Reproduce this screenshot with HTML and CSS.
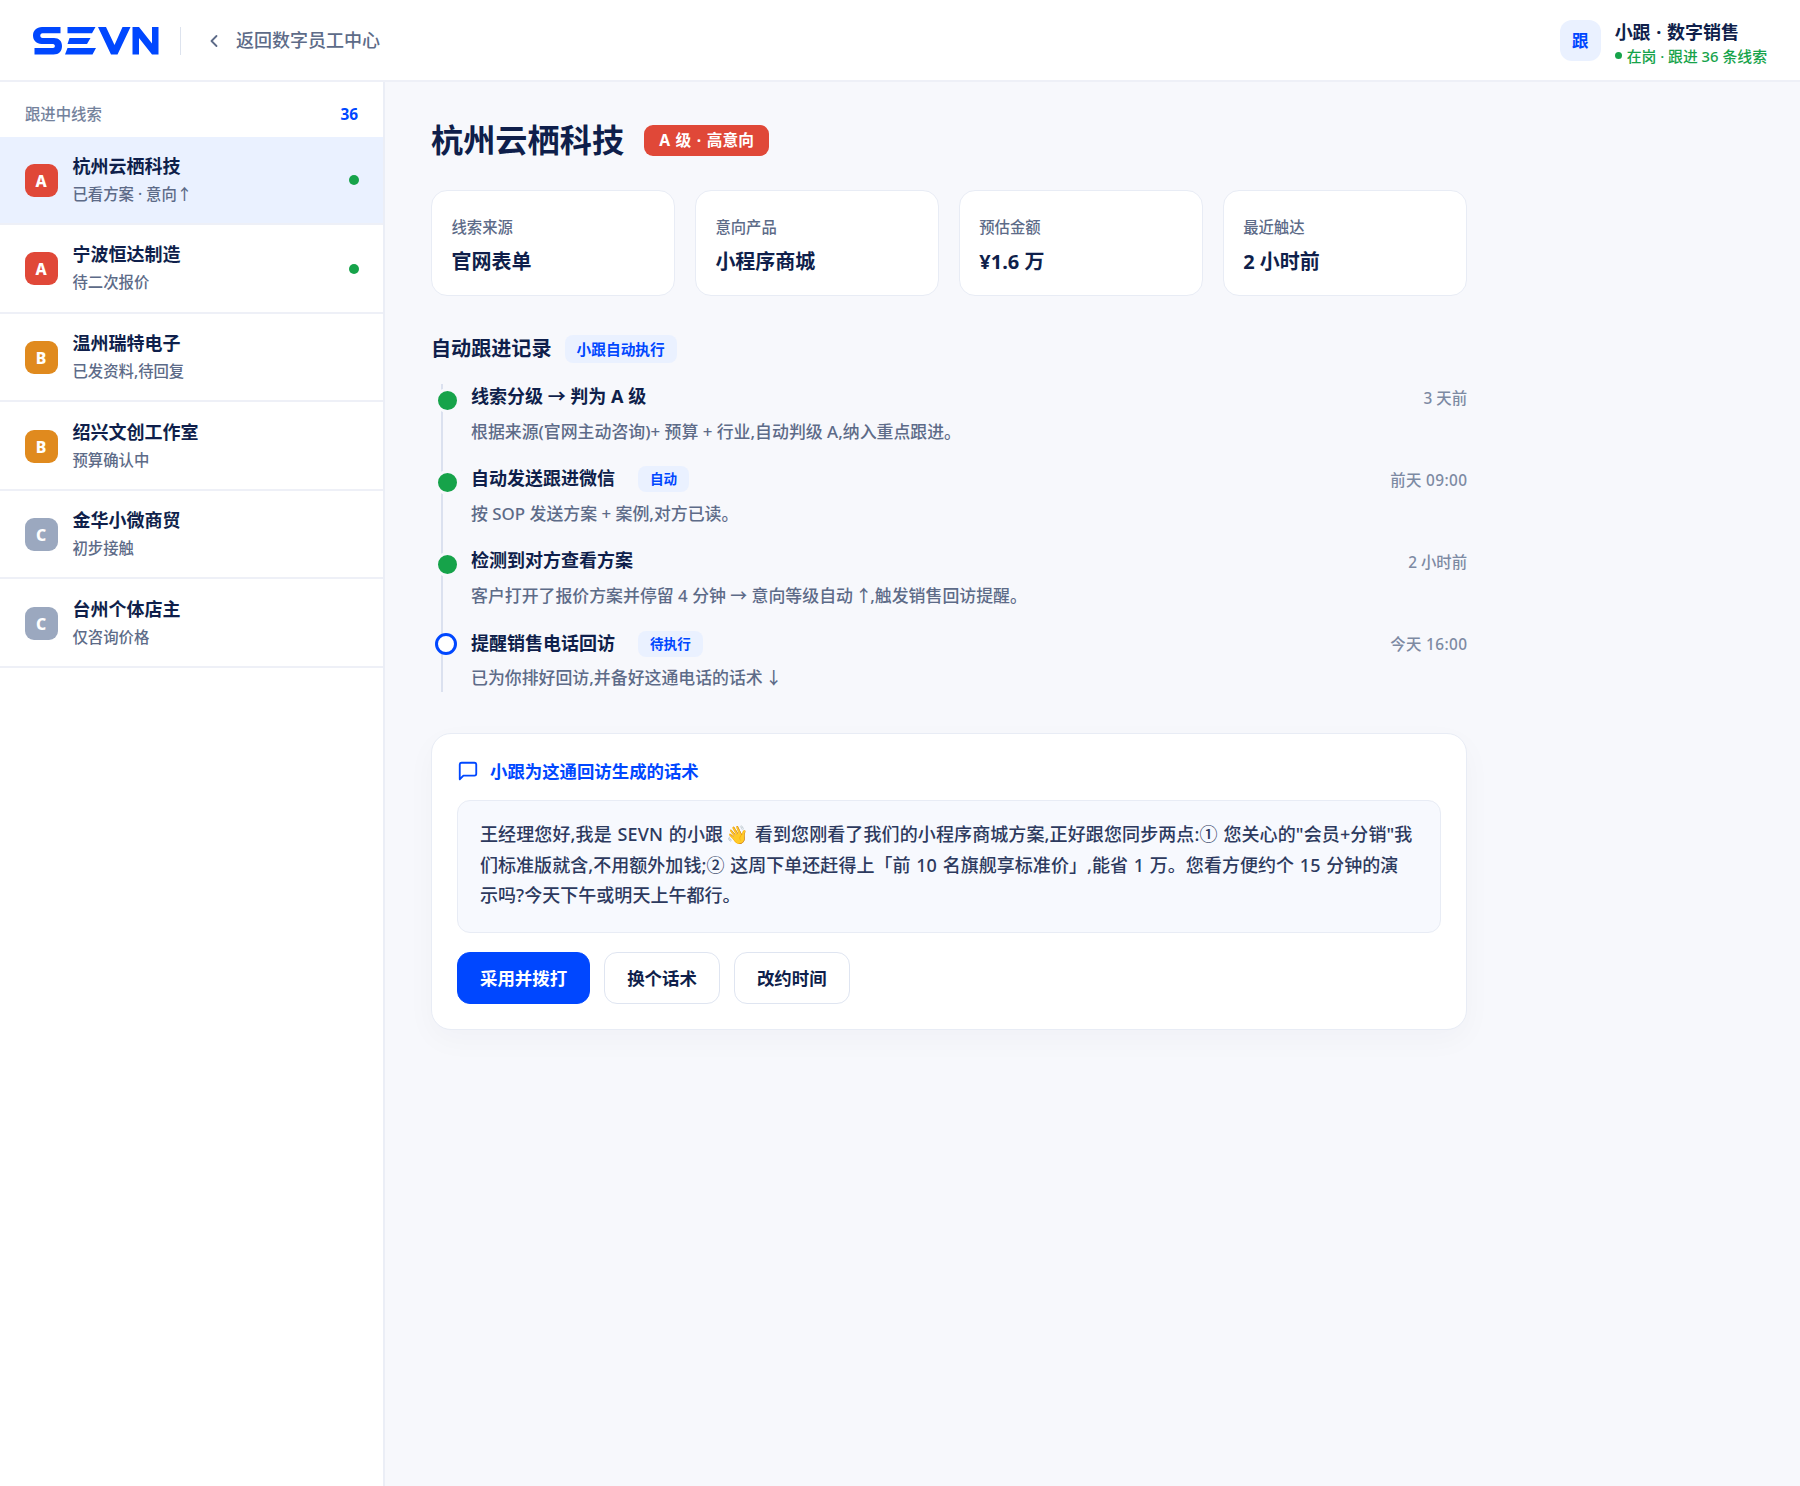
FILE: index.html
```html
<!DOCTYPE html>
<html lang="zh-CN">

<head>
    <meta charset="UTF-8">
    <title>小跟 · 数字销售</title>
    <meta name="viewport" content="width=device-width, initial-scale=1.0">
    <link rel="stylesheet" href="styles.css">
</head>

<body>
    <header class="topbar">
        <svg class="logo" viewBox="0 0 126 28" fill="#0047ff" role="img" aria-label="SEVN">
            <path d="M27.500 0H9C3.500 0 0 3.600 0 8.500S3.500 17 8.500 17H20C22.500 17 22.500 21 20 21H1.500V27.500H20.500C26 27.500 29 24 29 19S26 11 21 11H9.500C6.500 11 6.500 6.300 9.500 6.300H27.500Z"/>
            <path d="M34.500 0H62.500L59 6.300H34.500ZM36.500 11H57.500L54 17H34.500ZM34.500 21H63L59.500 27.500H32Z"/>
            <path d="M65 0H73L81.500 18L89.500 0H97.500L84.500 27.500H78Z"/>
            <path d="M99.500 0H106L119 16.500V0H125.500V27.500H119L106 11V27.500H99.500Z"/>
        </svg>
        <span class="divider"></span>
        <a class="back" href="#">
            <svg width="20" height="20" viewBox="0 0 24 24" fill="none" stroke="currentColor" stroke-width="2.2" stroke-linecap="round" stroke-linejoin="round"><path d="M15 18l-6-6 6-6"/></svg>
            <span>返回数字员工中心</span>
        </a>
        <div class="agent">
            <div class="avatar">跟</div>
            <div class="agent-info">
                <div class="agent-name">小跟 · 数字销售</div>
                <div class="agent-status"><i></i>在岗 · 跟进 36 条线索</div>
            </div>
        </div>
    </header>

    <div class="layout">
        <aside class="sidebar">
            <div class="side-head"><span>跟进中线索</span><b>36</b></div>
            <div class="lead active">
                <span class="grade a">A</span>
                <div class="lead-text"><b>杭州云栖科技</b><p>已看方案 · 意向↑</p></div>
                <i class="dot"></i>
            </div>
            <div class="lead">
                <span class="grade a">A</span>
                <div class="lead-text"><b>宁波恒达制造</b><p>待二次报价</p></div>
                <i class="dot"></i>
            </div>
            <div class="lead">
                <span class="grade b">B</span>
                <div class="lead-text"><b>温州瑞特电子</b><p>已发资料,待回复</p></div>
            </div>
            <div class="lead">
                <span class="grade b">B</span>
                <div class="lead-text"><b>绍兴文创工作室</b><p>预算确认中</p></div>
            </div>
            <div class="lead">
                <span class="grade c">C</span>
                <div class="lead-text"><b>金华小微商贸</b><p>初步接触</p></div>
            </div>
            <div class="lead">
                <span class="grade c">C</span>
                <div class="lead-text"><b>台州个体店主</b><p>仅咨询价格</p></div>
            </div>
        </aside>

        <main class="main">
            <div class="title-row">
                <h1>杭州云栖科技</h1>
                <span class="intent">A 级 · 高意向</span>
            </div>

            <div class="stats">
                <div class="stat"><p>线索来源</p><b>官网表单</b></div>
                <div class="stat"><p>意向产品</p><b>小程序商城</b></div>
                <div class="stat"><p>预估金额</p><b>¥1.6 万</b></div>
                <div class="stat"><p>最近触达</p><b>2 小时前</b></div>
            </div>

            <div class="section-head">
                <h2>自动跟进记录</h2>
                <span class="tag tag-lg">小跟自动执行</span>
            </div>

            <div class="timeline">
                <div class="step">
                    <i class="node"></i>
                    <div class="step-head"><b>线索分级 → 判为 A 级</b><time>3 天前</time></div>
                    <p>根据来源(官网主动咨询)+ 预算 + 行业,自动判级 A,纳入重点跟进。</p>
                </div>
                <div class="step">
                    <i class="node"></i>
                    <div class="step-head"><b>自动发送跟进微信</b><span class="tag">自动</span><time class="clock">前天 09:00</time></div>
                    <p>按 SOP 发送方案 + 案例,对方已读。</p>
                </div>
                <div class="step">
                    <i class="node"></i>
                    <div class="step-head"><b>检测到对方查看方案</b><time>2 小时前</time></div>
                    <p>客户打开了报价方案并停留 4 分钟 → 意向等级自动 <span class="arrow">↑</span>,触发销售回访提醒。</p>
                </div>
                <div class="step">
                    <i class="node pending"></i>
                    <div class="step-head"><b>提醒销售电话回访</b><span class="tag">待执行</span><time class="clock">今天 16:00</time></div>
                    <p>已为你排好回访,并备好这通电话的话术 <span class="arrow">↓</span></p>
                </div>
            </div>

            <section class="script-card">
                <div class="script-title">
                    <svg width="22" height="22" viewBox="0 0 24 24" fill="none" stroke="currentColor" stroke-width="2" stroke-linecap="round" stroke-linejoin="round"><path d="M21 15a2 2 0 0 1-2 2H7l-4 4V5a2 2 0 0 1 2-2h14a2 2 0 0 1 2 2z"/></svg>
                    小跟为这通回访生成的话术
                </div>
                <div class="script-box">王经理您好,我是 SEVN 的小跟 <span class="wave">👋</span> 看到您刚看了我们的小程序商城方案,正好跟您同步两点:① 您关心的"会员+分销"我<br>们标准版就含,不用额外加钱;② 这周下单还赶得上「前 10 名旗舰享标准价」,能省 1 万。您看方便约个 15 分钟的演<br>示吗?今天下午或明天上午都行。</div>
                <div class="actions">
                    <button class="btn primary">采用并拨打</button>
                    <button class="btn">换个话术</button>
                    <button class="btn">改约时间</button>
                </div>
            </section>
        </main>
    </div>
</body>

</html>
```
FILE: styles.css
```css
* {
    box-sizing: border-box;
}

body {
    margin: 0;
    min-height: 100vh;
    display: flex;
    flex-direction: column;
    font-family: "Noto Sans", "Noto Sans CJK SC", sans-serif;
    font-weight: 500;
    background: #f7f8fc;
    color: #0f1f4b;
}

h1, h2, p {
    margin: 0;
}

b, h1, h2 {
    font-weight: 700;
}

i {
    display: block;
    flex: none;
}

svg {
    flex: none;
}

.topbar {
    height: 82px;
    display: flex;
    align-items: center;
    padding: 1px 33px 0;
    background: #fff;
    border-bottom: 2px solid #eef0f7;
}

.logo {
    width: 126px;
    height: 28px;
}

.divider {
    width: 1px;
    height: 28px;
    margin: 0 23px 0 21px;
    background: #dde3ee;
}

.back {
    display: flex;
    align-items: center;
    gap: 12px;
    color: #5d6b88;
    font-size: 18px;
    line-height: 26px;
    text-decoration: none;
}

.back span {
    padding-bottom: 2px;
}

.agent {
    margin-left: auto;
    display: flex;
    align-items: center;
    gap: 14px;
}

.avatar {
    width: 41px;
    height: 41px;
    border-radius: 12px;
    background: #eaf1ff;
    color: #0047ff;
    font-size: 16.500px;
    font-weight: 700;
    line-height: 42px;
    text-align: center;
}

.agent-info {
    padding-top: 6px;
}

.agent-name {
    font-size: 18px;
    font-weight: 700;
    line-height: 24px;
    word-spacing: 1px;
}

.agent-status {
    display: flex;
    align-items: center;
    gap: 5px;
    color: #16a34a;
    font-size: 14.850px;
    line-height: 24px;
}

.agent-status i {
    width: 7px;
    height: 7px;
    border-radius: 50%;
    background: #16a34a;
}

.layout {
    flex: 1;
    display: flex;
}

.sidebar {
    width: 385px;
    flex: none;
    background: #fff;
    border-right: 2px solid #ebeef6;
}

.side-head {
    height: 55px;
    display: flex;
    justify-content: space-between;
    padding: 21px 25px 0 25px;
    color: #74829c;
    font-size: 15.360px;
    line-height: 24px;
}

.side-head b {
    color: #0047ff;
}

.lead {
    height: 88.600px;
    display: flex;
    align-items: center;
    gap: 15px;
    padding: 1px 24px 0 24.500px;
    border-bottom: 2px solid #eef0f7;
}

.lead.active {
    margin-top: -0.500px;
    background: #eaf1ff;
}

.grade {
    width: 33px;
    height: 33px;
    border-radius: 9px;
    color: #fff;
    font-size: 15.800px;
    font-weight: 800;
    line-height: 34px;
    text-align: center;
}

.grade.a {
    background: #e04838;
}

.grade.b {
    background: #e08a1e;
}

.grade.c {
    background: #9ba8bf;
}

.lead-text {
    flex: 1;
}

.lead-text b {
    display: block;
    font-size: 18px;
    line-height: 28px;
}

.lead-text p {
    padding-top: 1px;
    color: #5d6b88;
    font-size: 15.360px;
    line-height: 28px;
}

.dot {
    width: 10px;
    height: 10px;
    border-radius: 50%;
    background: #16a34a;
}

.main {
    width: 1082px;
    padding: 37px 0 0 46px;
}

.title-row {
    display: flex;
    align-items: center;
    gap: 20px;
}

h1 {
    font-size: 32.200px;
    line-height: 42px;
}

.intent {
    height: 31px;
    padding: 0 15px;
    border-radius: 9px;
    background: #e04838;
    color: #fff;
    font-size: 15.700px;
    font-weight: 700;
    line-height: 31px;
    word-spacing: 1.500px;
}

.stats {
    display: grid;
    grid-template-columns: repeat(4, 1fr);
    gap: 19.500px;
    margin-top: 29px;
}

.stat {
    height: 106px;
    padding: 23px 19.500px 0;
    background: #fff;
    border: 1px solid #e8ecf5;
    border-radius: 16px;
}

.stat p {
    color: #5d6b88;
    font-size: 15.360px;
    line-height: 28px;
}

.stat b {
    display: block;
    margin-top: 4px;
    font-size: 20px;
    line-height: 32px;
}

.section-head {
    display: flex;
    align-items: center;
    gap: 13px;
    margin-top: 37px;
}

h2 {
    font-size: 20.100px;
    line-height: 32px;
}

.tag {
    height: 26px;
    padding: 0 12px;
    border-radius: 8px;
    background: #eaf1ff;
    color: #0047ff;
    font-size: 13.600px;
    font-weight: 600;
    line-height: 26px;
}

.tag-lg {
    height: 28px;
    font-size: 14.700px;
    line-height: 28px;
}

/* vertical rail sits behind the nodes */
.timeline {
    height: 308px;
    margin: 19px 0 0 10px;
    padding-left: 30px;
    background: linear-gradient(#dbe1ef, #dbe1ef) 0 0 / 2px 100% no-repeat;
}

.step {
    position: relative;
    height: 82.200px;
}

.node {
    position: absolute;
    left: -36px;
    top: 4px;
    width: 25px;
    height: 25px;
    border: 3px solid #f7f8fc;
    border-radius: 50%;
    background: #16a34a;
}

.node.pending {
    width: 22px;
    height: 22px;
    top: 2px;
    border-color: #0047ff;
    background: #fff;
}

.step-head {
    display: flex;
    align-items: center;
    height: 25px;
}

.step-head b {
    font-size: 18px;
    line-height: 25px;
}

.step-head .tag {
    margin: 1px 0 0 23px;
}

.step-head time {
    margin: 1px 0 0 auto;
    color: #7d8aa3;
    font-size: 15.360px;
}

.step-head .clock {
    letter-spacing: 0.400px;
    margin-right: -0.400px;
}

.step p {
    margin-top: 8.500px;
    color: #5d6b88;
    font-size: 16.900px;
    line-height: 28px;
}

.arrow {
    margin: 0 -2px;
}

.script-card {
    height: 297px;
    margin-top: 41px;
    padding: 23px 25px;
    background: #fff;
    border: 1px solid #e8ecf5;
    border-radius: 20px;
    box-shadow: 0 10px 30px rgba(15, 31, 75, 0.03);
}

.script-title {
    display: flex;
    align-items: center;
    gap: 11px;
    color: #0047ff;
    font-size: 17.400px;
    font-weight: 700;
    line-height: 28px;
}

.script-box {
    height: 133px;
    margin-top: 15px;
    padding: 18px 22px;
    background: #f7f9fe;
    border: 1px solid #e8ecf5;
    border-radius: 13px;
    color: #2d3a5e;
    font-size: 18px;
    line-height: 30.600px;
    letter-spacing: 0.040px;
    word-spacing: 1px;
    white-space: nowrap;
}

.script-box::first-line {
    letter-spacing: 0.110px;
}

.wave {
    margin: 0 1px 0 -3px;
}

.actions {
    display: flex;
    gap: 14px;
    margin-top: 19px;
}

.btn {
    height: 52px;
    padding: 0 22px 1px;
    background: #fff;
    border: 1px solid #dfe5f1;
    border-radius: 13px;
    color: #0f1f4b;
    font-family: inherit;
    font-size: 17.450px;
    font-weight: 600;
}

.btn.primary {
    background: #0047ff;
    border-color: #0047ff;
    color: #fff;
}
```
